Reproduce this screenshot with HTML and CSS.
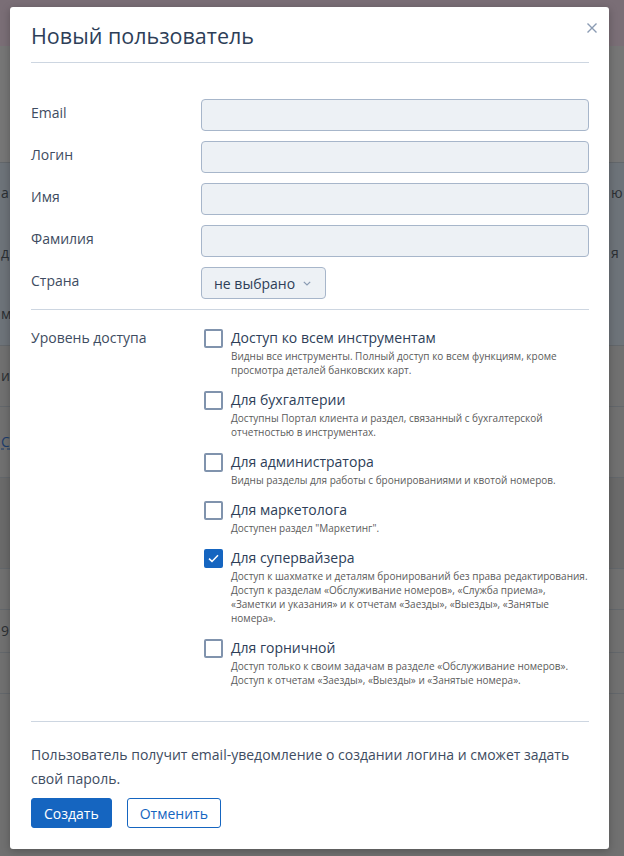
FILE: index.html
```html
<!DOCTYPE html>
<html lang="ru">
  <head>
    <meta charset="UTF-8" />
    <meta name="viewport" content="width=device-width, initial-scale=1.0" />
    <title>Новый пользователь</title>
    <link rel="stylesheet" href="styles.css">
  </head>
  <body>
    <!-- page behind the dialog, dimmed -->
    <div class="page">
      <div class="page-top"></div>
      <div class="page-row r1"></div>
      <div class="page-row r2">
        <span class="frag frag-l">а</span><span class="frag frag-r">ю</span>
      </div>
      <div class="page-row r3">
        <span class="frag frag-l">д</span><span class="frag frag-r">я</span>
      </div>
      <div class="page-row r4"><span class="frag frag-l">м</span></div>
      <div class="page-row r5"><span class="frag frag-l">и</span></div>
      <div class="page-row r6"><span class="frag frag-l link">С</span></div>
      <div class="page-row r7"></div>
      <div class="page-row r8"></div>
      <div class="page-row r9"><span class="frag frag-l">9</span></div>
      <div class="page-row r10"></div>
      <div class="page-row r11"></div>
    </div>

    <div class="modal">
      <button class="modal-close" aria-label="Закрыть">
        <svg width="10" height="10" viewBox="0 0 10 10">
          <path d="M0.5 0.5 L9.5 9.5 M9.5 0.5 L0.5 9.5" stroke="#8a9bb3" stroke-width="1.4" fill="none" />
        </svg>
      </button>
      <h2 class="modal-title">Новый пользователь</h2>

      <div class="form">
        <label class="form-label">Email</label>
        <input class="form-input" type="text" />

        <label class="form-label">Логин</label>
        <input class="form-input" type="text" />

        <label class="form-label">Имя</label>
        <input class="form-input" type="text" />

        <label class="form-label">Фамилия</label>
        <input class="form-input" type="text" />

        <label class="form-label">Страна</label>
        <div>
          <div class="select">
            не выбрано
            <svg width="8" height="5" viewBox="0 0 8 5">
              <path d="M0.8 0.8 L4 4 L7.2 0.8" stroke="#8a9bb3" stroke-width="1.2" fill="none" />
            </svg>
          </div>
        </div>
      </div>

      <div class="access">
        <div class="form-label access-label">Уровень доступа</div>
        <div class="options">
          <div class="option">
            <span class="check"></span>
            <div>
              <div class="option-title">Доступ ко всем инструментам</div>
              <div class="option-desc">Видны все инструменты. Полный доступ ко всем функциям, кроме<br>просмотра деталей банковских карт.</div>
            </div>
          </div>
          <div class="option">
            <span class="check"></span>
            <div>
              <div class="option-title">Для бухгалтерии</div>
              <div class="option-desc">Доступны Портал клиента и раздел, связанный с бухгалтерской<br>отчетностью в инструментах.</div>
            </div>
          </div>
          <div class="option">
            <span class="check"></span>
            <div>
              <div class="option-title">Для администратора</div>
              <div class="option-desc">Видны разделы для работы с бронированиями и квотой номеров.</div>
            </div>
          </div>
          <div class="option">
            <span class="check"></span>
            <div>
              <div class="option-title">Для маркетолога</div>
              <div class="option-desc">Доступен раздел "Маркетинг".</div>
            </div>
          </div>
          <div class="option">
            <span class="check checked">
              <svg width="11" height="9" viewBox="0 0 11 9">
                <path d="M1 4.6 L4 7.4 L10 1.2" stroke="#fff" stroke-width="1.5" fill="none" />
              </svg>
            </span>
            <div>
              <div class="option-title">Для супервайзера</div>
              <div class="option-desc">Доступ к шахматке и деталям бронирований без права редактирования.<br>Доступ к разделам «Обслуживание номеров», «Служба приема»,<br>«Заметки и указания» и к отчетам «Заезды», «Выезды», «Занятые<br>номера».</div>
            </div>
          </div>
          <div class="option">
            <span class="check"></span>
            <div>
              <div class="option-title">Для горничной</div>
              <div class="option-desc">Доступ только к своим задачам в разделе «Обслуживание номеров».<br>Доступ к отчетам «Заезды», «Выезды» и «Занятые номера».</div>
            </div>
          </div>
        </div>
      </div>

      <div class="footer">
        <p class="note">Пользователь получит email-уведомление о создании логина и сможет задать свой пароль.</p>
        <div class="buttons">
          <button class="btn btn-primary">Создать</button>
          <button class="btn btn-outline">Отменить</button>
        </div>
      </div>
    </div>
  </body>
</html>
```

FILE: styles.css
```css
body {
  margin: 0;
  font-family: "Open Sans", "Noto Sans", sans-serif;
  background: #6f7377;
  width: 624px;
  height: 856px;
  overflow: hidden;
  position: relative;
}
.page-top {
  height: 46px;
  background: #7a6e76;
}
.page-row {
  position: relative;
  border-bottom: 1px solid #63676b;
  font-size: 14px;
  color: #2b2f33;
}
.r1 {
  height: 116px;
  background: #767676;
}
.r2 {
  height: 60px;
  background: #6d7379;
  border-bottom: none;
}
.r3 {
  height: 60px;
  background: #6d7379;
  border-bottom: none;
}
.r4 {
  height: 62px;
  background: #6d7379;
}
.r5 {
  height: 60px;
  background: #707070;
}
.r6 {
  height: 70px;
  background: #707070;
}
.r7 {
  height: 90px;
  background: #6a6a6a;
}
.r8 {
  height: 40px;
  background: #707070;
}
.r9 {
  height: 42px;
  background: #707070;
}
.r10 {
  height: 40px;
  background: #707070;
}
.r11 {
  height: 200px;
  background: #707070;
}
.frag {
  position: absolute;
  top: 50%;
  transform: translateY(-50%);
  line-height: 1;
}
.frag-l {
  left: 1px;
}
.frag-r {
  left: 611px;
}
.link {
  color: #1d3d6b;
  border-bottom: 1px dashed #1d3d6b;
}

.modal {
  position: absolute;
  top: 7px;
  left: 10px;
  width: 599px;
  box-sizing: border-box;
  padding: 0 20px 21px 21px;
  background: #fff;
  border-radius: 3px;
  box-shadow: 0 2px 8px rgba(0, 0, 0, 0.25);
  color: #3e4c61;
}
.modal-close {
  position: absolute;
  top: 11px;
  right: 7px;
  width: 20px;
  height: 20px;
  padding: 0;
  border: none;
  background: none;
  display: flex;
  align-items: center;
  justify-content: center;
}
.modal-title {
  margin: 0;
  padding: 13px 0 10px;
  font-size: 21.5px;
  font-weight: 400;
  line-height: 32px;
  color: #2d3e58;
  border-bottom: 1px solid #cdd6e1;
}

.form {
  display: grid;
  grid-template-columns: 170px 1fr;
  row-gap: 10px;
  align-items: center;
  padding: 36px 0 10px;
  border-bottom: 1px solid #cdd6e1;
}
.form-label {
  font-size: 14px;
  color: #3e4c61;
}
.form .form-label {
  padding-bottom: 5px;
}
.form-input {
  height: 32px;
  box-sizing: border-box;
  border: 1px solid #a7b6ca;
  border-radius: 4px;
  background: #edf1f5;
  margin: 0;
}
.select {
  display: inline-flex;
  align-items: center;
  gap: 8px;
  height: 32px;
  box-sizing: border-box;
  padding: 0 14px 0 12px;
  border: 1px solid #a7b6ca;
  border-radius: 4px;
  background: #edf1f5;
  font-size: 14px;
  color: #2d3e58;
}

.access {
  display: grid;
  grid-template-columns: 170px 1fr;
  padding: 18px 0 34px;
  border-bottom: 1px solid #cdd6e1;
}
.access-label {
  line-height: 20px;
}
.options {
  display: flex;
  flex-direction: column;
  gap: 13px;
}
.option {
  display: flex;
  gap: 8px;
  padding-left: 3px;
}
.check {
  flex: none;
  width: 19px;
  height: 19px;
  box-sizing: border-box;
  margin-top: 1px;
  border: 2px solid #8093ad;
  border-radius: 2px;
  display: flex;
  align-items: center;
  justify-content: center;
}
.check.checked {
  background: #1565c0;
  border-color: #1565c0;
}
.option-title {
  font-size: 14px;
  line-height: 20px;
  color: #2d3e58;
}
.option-desc {
  font-size: 10px;
  line-height: 14px;
  margin-top: 1px;
  color: #5b5b5b;
}

.footer {
  padding-top: 21px;
}
.note {
  margin: 0;
  font-size: 14px;
  line-height: 24px;
  color: #3e4c61;
}
.buttons {
  display: flex;
  gap: 15px;
  margin-top: 7px;
}
.btn {
  height: 30px;
  box-sizing: border-box;
  padding: 0 12px;
  border-radius: 3px;
  font-family: inherit;
  font-size: 14px;
}
.btn-primary {
  background: #1565c0;
  border: 1px solid #1565c0;
  color: #fff;
}
.btn-outline {
  background: #fff;
  border: 1px solid #1565c0;
  color: #1565c0;
}
```
